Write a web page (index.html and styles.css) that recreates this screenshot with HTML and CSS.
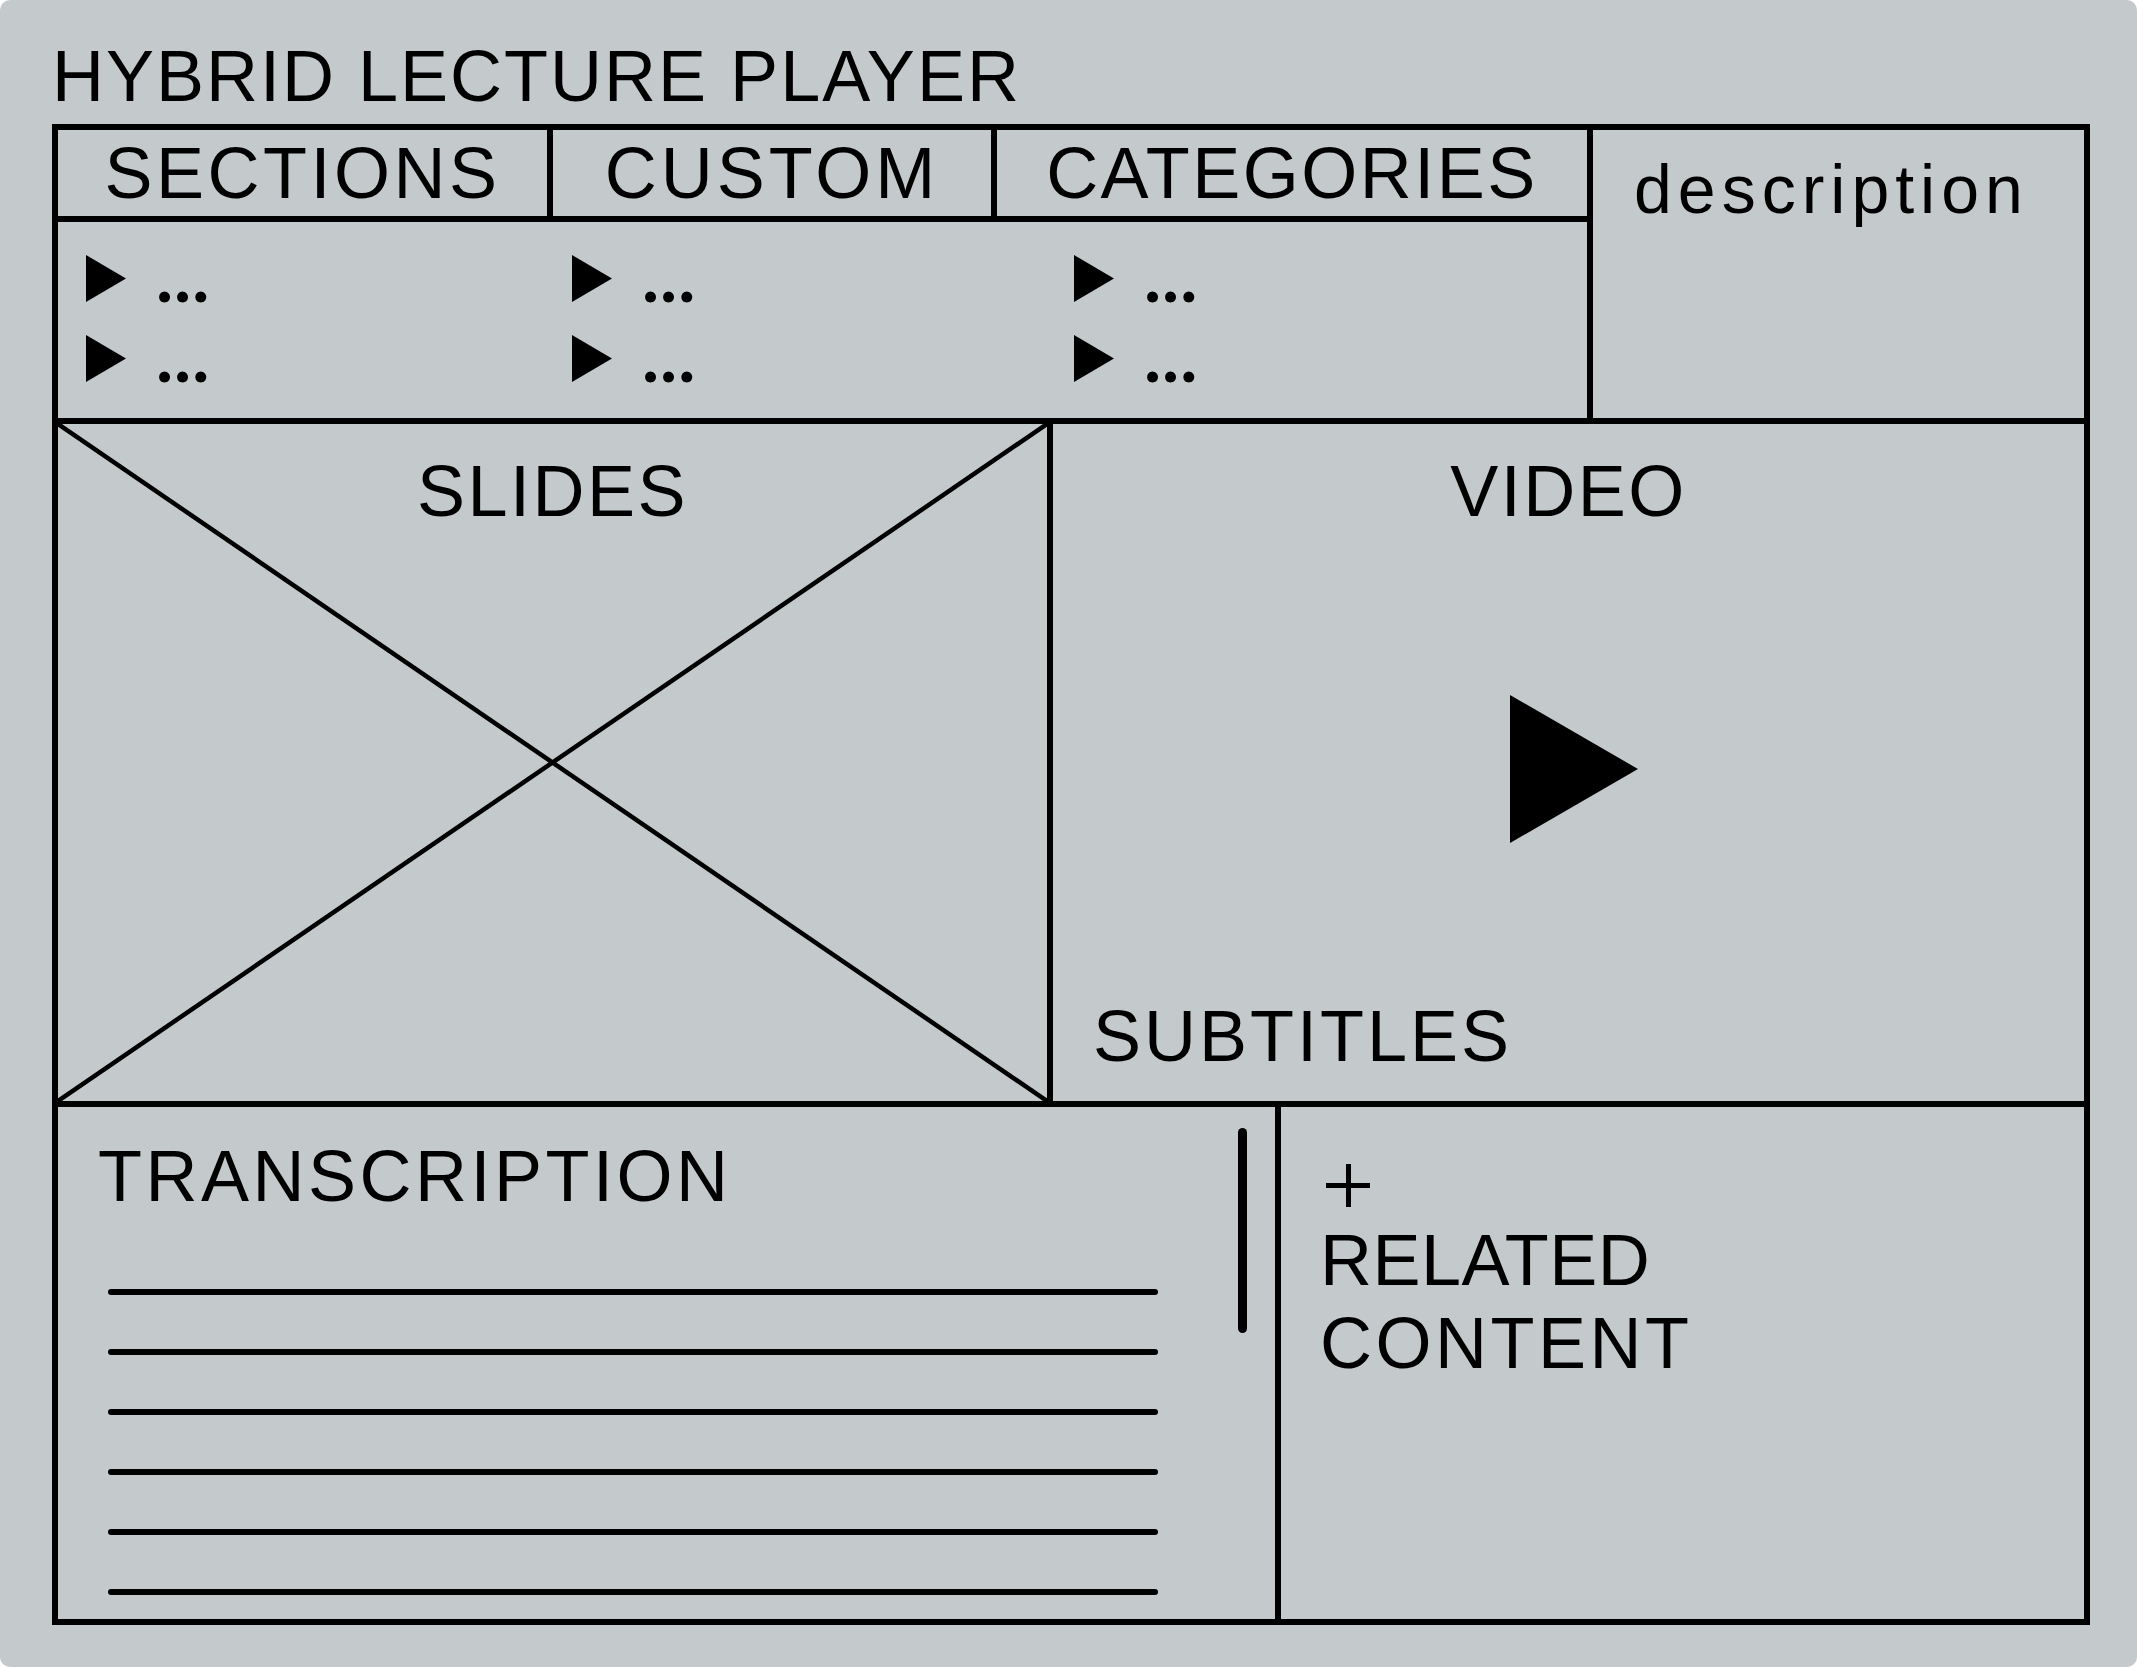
FILE: index.html
```html
<!DOCTYPE html>
<html lang="en">

<head>
    <meta charset="UTF-8">
    <meta name="viewport" content="width=device-width, initial-scale=1.0">
    <title>Hybrid Lecture Player</title>
    <link rel="stylesheet" href="styles.css">
</head>

<body>
    <div class="board">
        <h1 class="title">HYBRID LECTURE PLAYER</h1>

        <div class="frame">
            <!-- top: navigation tabs + description -->
            <div class="top-row">
                <div class="nav">
                    <div class="tabs">
                        <div class="tab tab-sections">SECTIONS</div>
                        <div class="tab tab-custom">CUSTOM</div>
                        <div class="tab">CATEGORIES</div>
                    </div>
                    <div class="lists">
                        <ul class="list">
                            <li class="item"><span class="arrow"></span><span class="dots">...</span></li>
                            <li class="item"><span class="arrow"></span><span class="dots">...</span></li>
                        </ul>
                        <ul class="list">
                            <li class="item"><span class="arrow"></span><span class="dots">...</span></li>
                            <li class="item"><span class="arrow"></span><span class="dots">...</span></li>
                        </ul>
                        <ul class="list">
                            <li class="item"><span class="arrow"></span><span class="dots">...</span></li>
                            <li class="item"><span class="arrow"></span><span class="dots">...</span></li>
                        </ul>
                    </div>
                </div>
                <div class="description">description</div>
            </div>

            <!-- middle: slides + video -->
            <div class="middle-row">
                <div class="slides">
                    <svg class="cross" viewBox="0 0 989 677" preserveAspectRatio="none">
                        <line x1="0" y1="0" x2="989" y2="677" />
                        <line x1="989" y1="0" x2="0" y2="677" />
                    </svg>
                    <div class="label">SLIDES</div>
                </div>
                <div class="video">
                    <div class="label">VIDEO</div>
                    <div class="player">
                        <span class="play"></span>
                    </div>
                    <div class="subtitles">SUBTITLES</div>
                </div>
            </div>

            <!-- bottom: transcription + related -->
            <div class="bottom-row">
                <div class="transcription">
                    <div class="transcript-body">
                        <div class="section-title">TRANSCRIPTION</div>
                        <div class="text-lines">
                            <span class="text-line"></span>
                            <span class="text-line"></span>
                            <span class="text-line"></span>
                            <span class="text-line"></span>
                            <span class="text-line"></span>
                            <span class="text-line"></span>
                        </div>
                    </div>
                    <div class="scrollbar"></div>
                </div>
                <div class="related">
                    <div class="plus"></div>
                    <div class="related-line related-first">RELATED</div>
                    <div class="related-line related-second">CONTENT</div>
                </div>
            </div>
        </div>
    </div>
</body>

</html>
```

FILE: styles.css
```css
body {
    margin: 0;
    background-color: #ffffff;
    font-family: "Liberation Sans", Arial, sans-serif;
    color: #000;
}

.board {
    width: 2137px;
    height: 1667px;
    box-sizing: border-box;
    padding-left: 52px;
    background-color: #c4c9cc;
    border-radius: 10px;
    overflow: hidden;
}

.title {
    margin: 40px 0 12px 0;
    font-size: 72px;
    font-weight: normal;
    line-height: 1;
    letter-spacing: 2px;
}

.frame {
    width: 2038px;
    height: 1501px;
    box-sizing: border-box;
    border: 6px solid #000;
    display: grid;
    grid-template-rows: 294px 683px 1fr;
}

/* top row */

.top-row {
    display: grid;
    grid-template-columns: 1535px 1fr;
    border-bottom: 6px solid #000;
}

.nav {
    border-right: 6px solid #000;
    display: flex;
    flex-direction: column;
}

.tabs {
    height: 92px;
    box-sizing: border-box;
    border-bottom: 6px solid #000;
    display: grid;
    grid-template-columns: 495px 444px 1fr;
}

.tab {
    display: flex;
    align-items: center;
    justify-content: center;
    font-size: 72px;
    line-height: 1;
    letter-spacing: 2.5px;
}

.tab-sections,
.tab-custom {
    border-right: 6px solid #000;
}

.tab-sections {
    letter-spacing: 3.5px;
}

.tab-custom {
    letter-spacing: 4px;
}

.lists {
    display: grid;
    grid-template-columns: 486px 502px 1fr;
    padding: 16px 0 0 28px;
}

.list {
    list-style: none;
    margin: 0;
    padding: 0;
    display: flex;
    flex-direction: column;
    gap: 8px;
}

.item {
    display: flex;
    align-items: baseline;
    gap: 30px;
}

.arrow {
    width: 40px;
    height: 47px;
    background-color: #000;
    clip-path: polygon(0 0, 100% 50%, 0 100%);
}

.dots {
    font-family: Lato, "Liberation Sans", sans-serif;
    font-size: 72px;
    line-height: 1;
    font-weight: bold;
    letter-spacing: 1px;
}

.description {
    padding: 25px 0 0 41px;
    font-size: 68px;
    line-height: 1;
    letter-spacing: 6px;
}

/* middle row */

.middle-row {
    display: grid;
    grid-template-columns: 995px 1fr;
    border-bottom: 6px solid #000;
}

.slides {
    position: relative;
    border-right: 6px solid #000;
    display: flex;
    justify-content: center;
}

.cross {
    position: absolute;
    left: 0;
    top: 0;
    width: 100%;
    height: 100%;
}

.cross line {
    stroke: #000;
    stroke-width: 4.5;
    vector-effect: non-scaling-stroke;
}

.label {
    position: relative;
    margin-top: 31px;
    font-size: 72px;
    line-height: 1;
    letter-spacing: 2.5px;
    text-align: center;
    height: 72px;
}

.video {
    display: flex;
    flex-direction: column;
}

.player {
    flex: 1;
    display: flex;
    align-items: center;
    justify-content: center;
}

.play {
    width: 128px;
    height: 148px;
    margin: 11px 0 0 11px;
    background-color: #000;
    clip-path: polygon(0 0, 100% 50%, 0 100%);
}

.subtitles {
    padding: 0 0 29px 40px;
    font-size: 72px;
    line-height: 1;
    letter-spacing: 3px;
}

/* bottom row */

.bottom-row {
    display: grid;
    grid-template-columns: 1223px 1fr;
}

.transcription {
    border-right: 6px solid #000;
    display: flex;
}

.transcript-body {
    flex: 1;
    padding: 33px 0 0 40px;
}

.section-title {
    font-size: 72px;
    line-height: 1;
    letter-spacing: 3.5px;
}

.text-lines {
    display: flex;
    flex-direction: column;
    gap: 54px;
    margin: 77px 0 0 10px;
}

.text-line {
    width: 1050px;
    height: 6px;
    border-radius: 3px;
    background-color: #000;
}

.scrollbar {
    width: 9px;
    height: 205px;
    margin: 21px 28px 0 0;
    border-radius: 5px;
    background-color: #000;
}

.related {
    padding: 57px 0 0 39px;
}

.plus {
    width: 44px;
    height: 43px;
    margin: 0 0 12px 6px;
    background:
        linear-gradient(#000, #000) center / 100% 5px no-repeat,
        linear-gradient(#000, #000) center / 5px 100% no-repeat;
}

.related-line {
    font-size: 72px;
    line-height: 83px;
}

.related-first {
    letter-spacing: 0.5px;
}

.related-second {
    letter-spacing: 3.5px;
}
```
